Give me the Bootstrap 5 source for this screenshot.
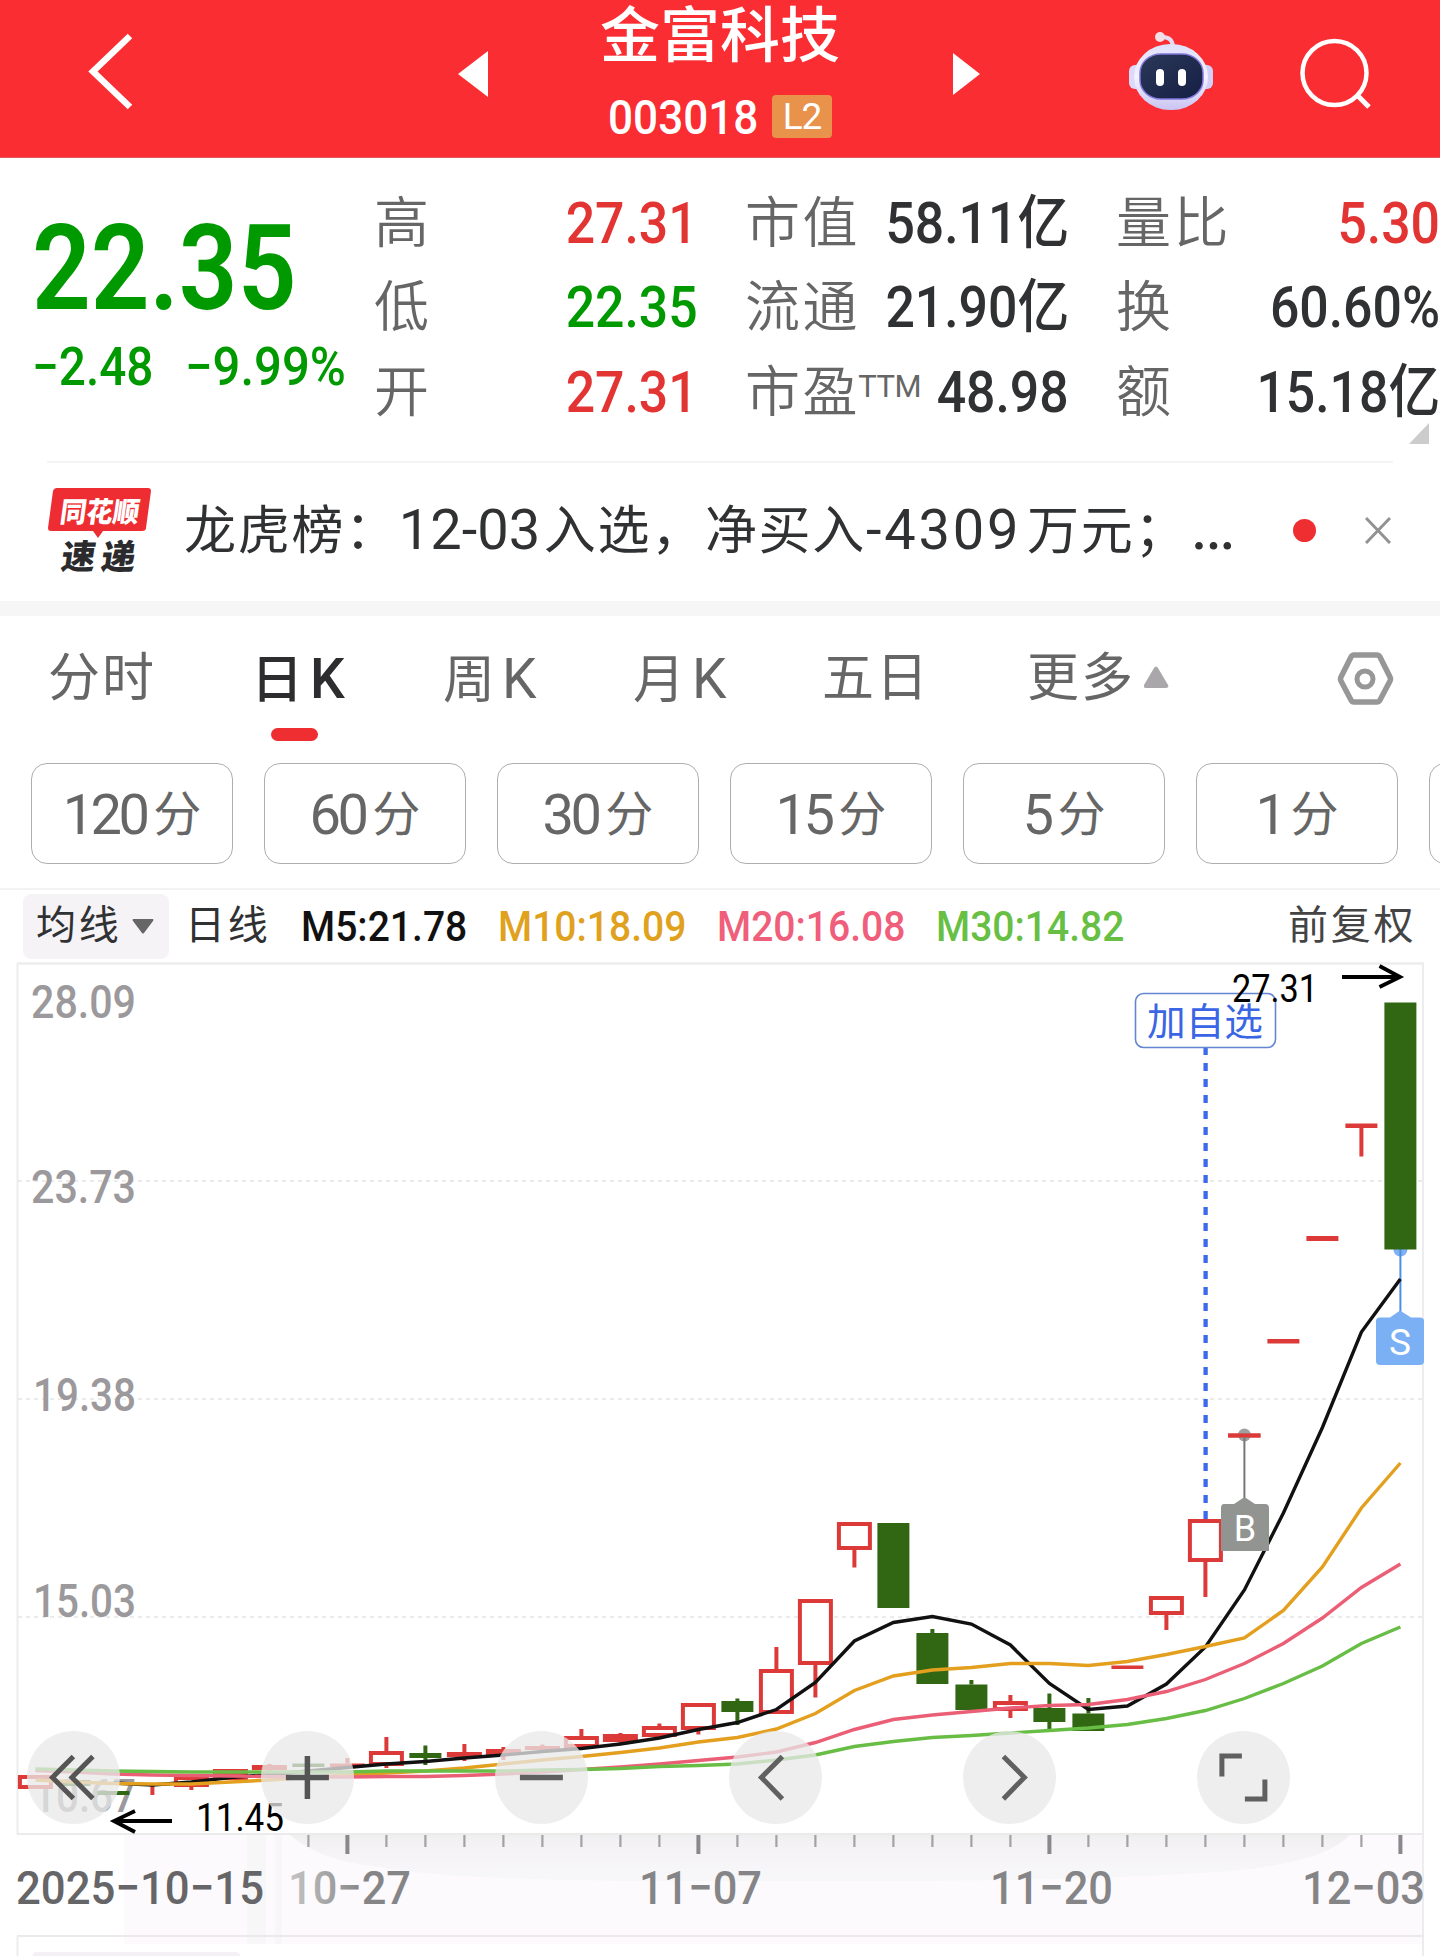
<!DOCTYPE html>
<html lang="zh-CN">
<head>
<meta charset="utf-8">
<meta name="viewport" content="width=device-width, initial-scale=1">
<title>金富科技 003018</title>
<link href="https://cdn.jsdelivr.net/npm/bootstrap@5.3.0/dist/css/bootstrap.min.css" rel="stylesheet">
<style>
  body{width:1440px;height:1957px;overflow:hidden;background:#fff;color:#303133;font-family:Roboto,"Noto Sans CJK SC",sans-serif;line-height:1;-webkit-font-smoothing:antialiased}
  svg{display:block;flex:none}
  .top-bar{height:158px;background:#f92d32;color:#fff;border-bottom:1px solid #e8575b}
  .stock-name{font-size:60px;font-weight:500;line-height:74px;height:74px;white-space:nowrap}
  .stock-code{font-size:49px;font-weight:500;line-height:56px;transform:scaleX(.9);transform-origin:left;width:162px;white-space:nowrap}
  .level-tag{width:60px;height:43px;border-radius:4px;background:#e8924c;font-size:37px;line-height:44px;letter-spacing:-1px}
  .quote{height:303px}
  .up{color:#e33434}.down{color:#009a00}
  .price-col{width:376px;padding:46px 0 0 32px}
  .price-now{font-size:119px;font-weight:600;line-height:130px;transform:scaleX(.865);transform-origin:left;white-space:nowrap}
  .price-diff{font-size:53px;font-weight:500;line-height:60px;margin-top:3px;white-space:nowrap}
  .price-diff span{display:inline-block;transform:scaleX(.9);transform-origin:left}
  .price-diff .diff-b{transform:scaleX(.925)}
  .diff-a{width:153px}
  .stat-col{width:320px;padding-top:24px}
  .stat-row{height:84.3px;white-space:nowrap}
  .stat-key{font-size:55px;letter-spacing:2.6px;color:#666;line-height:84px;margin-top:-1px;margin-left:-2px;font-weight:350}
  .stat-val{font-size:57.5px;font-weight:500;line-height:84px;transform:scaleX(.9);transform-origin:right;margin-right:-2px}
  .stat-key sup{font-size:31px;letter-spacing:-.5px;top:-14px;margin-left:-2px;font-weight:400;vertical-align:baseline;position:relative}
  .hair{height:2px;background:#f4f4f5;margin:0 47px}
  .news{height:138px;padding:0 47px 0 48px;font-size:52px}
  .news-text{white-space:nowrap;letter-spacing:1.7px;line-height:80px;width:1086px;margin-left:32px;margin-top:-2px}
  .news-text span{display:inline-block;font-size:56px;letter-spacing:0}
  .news-text .more-dots{font-size:68px;line-height:40px;margin-left:2px}
  .dot-red{width:23px;height:23px;border-radius:50%;background:#ee2e30;margin-top:-4px}
  .band{height:15px;background:#f6f6f7}
  .tabs{height:147px;font-size:52px;letter-spacing:2px;color:#666;padding-top:25px;padding-left:48px}
  .tabs>div{line-height:76px;white-space:nowrap}
  .tabs i{font-style:normal;margin-left:5px;font-size:55px}
  .tabs .on{color:#2d2d2f;font-weight:500;position:relative}
  .tabs .on::after{content:"";position:absolute;left:20px;top:87px;width:47px;height:13px;border-radius:7px;background:#ee2e30}
  .pills{height:125px;padding-left:31px;gap:31px;overflow:hidden}
  .pill{flex:none;width:202px;height:101px;padding-top:3px;border:1.6px solid #aeaeaf;border-radius:16px;font-size:48px;color:#666}
  .pill b{font-size:56px;font-weight:400;margin-right:7px;letter-spacing:-3.6px}
  .ma-bar{height:71px;border-top:2px solid #f3f3f4;font-size:42px;font-weight:500;white-space:nowrap;padding-top:3px}
  .ma-pick{width:146px;height:65px;border-radius:8px;background:#f6f3f7;margin:0 0 0 23px;padding-left:13px}
  .cjk{font-size:40px;letter-spacing:2.7px;font-weight:400;margin-top:-1px}
  .ma{transform:scaleX(.93);transform-origin:left;line-height:50px;margin-top:1px}
  .chart{position:relative;height:997px}
  .tools{position:absolute;left:27px;top:772px;gap:141.2px}
  .tool{width:92.8px;height:92.8px;border-radius:50%;background:rgba(233,233,233,.76);border:0;padding:0}
  svg text{font-family:Roboto,"Noto Sans CJK SC",sans-serif}
</style>
</head>
<body>
<header class="top-bar d-flex">
  <svg width="600" height="157" viewBox="0 0 600 157"><path d="M130 36 93 71.500 130 107" fill="none" stroke="#fff" stroke-width="6.500"/><path d="M458 74 488 51V97Z" fill="#fff"/></svg>
  <div style="width:240px">
    <div class="stock-name">金富科技</div>
    <div class="d-flex" style="padding:16px 0 0 8px">
      <div class="stock-code">003018</div>
      <div class="level-tag text-center" style="margin:5px 0 0 2px">L2</div>
    </div>
  </div>
  <svg width="600" height="157" viewBox="840 0 600 157">
    <defs><linearGradient id="shell" x1="0" y1="0" x2="0" y2="1"><stop offset="0" stop-color="#dfe0fb"/><stop offset=".5" stop-color="#f3f2ff"/><stop offset="1" stop-color="#c9c4f2"/></linearGradient>
    <linearGradient id="face" x1="0" y1="0" x2="1" y2="1"><stop offset="0" stop-color="#2c3858"/><stop offset="1" stop-color="#141f44"/></linearGradient></defs>
    <path d="M953 53 980 74 953 95Z" fill="#fff"/>
    <path d="M1160 37Q1172 36 1173 46" fill="none" stroke="#e6dcf4" stroke-width="4"/><circle cx="1160" cy="37" r="5" fill="#f3dfe8"/>
    <rect x="1129" y="65" width="14" height="24" rx="6" fill="#dcd9fa"/><rect x="1199" y="65" width="14" height="24" rx="6" fill="#d3cff8"/>
    <rect x="1134" y="44" width="74" height="66" rx="36" ry="33" fill="url(#shell)"/>
    <rect x="1140" y="54" width="63" height="45" rx="21" ry="19" fill="url(#face)" stroke="#8176dc" stroke-width="1.500"/>
    <rect x="1156" y="69" width="8" height="17" rx="4" fill="#fff"/><rect x="1178" y="69" width="8" height="17" rx="4" fill="#fff"/>
    <circle cx="1334.500" cy="73" r="32" fill="none" stroke="#fff" stroke-width="4.500"/><path d="M1357 95 1369 107" stroke="#fff" stroke-width="5"/>
  </svg>
</header>

<section class="quote d-flex">
  <div class="price-col">
    <div class="price-now down">22.35</div>
    <div class="price-diff down"><span class="diff-a">−2.48</span><span class="diff-b">−9.99%</span></div>
  </div>
  <div class="stat-col">
    <div class="stat-row d-flex justify-content-between"><span class="stat-key">高</span><span class="stat-val up">27.31</span></div>
    <div class="stat-row d-flex justify-content-between"><span class="stat-key">低</span><span class="stat-val down">22.35</span></div>
    <div class="stat-row d-flex justify-content-between"><span class="stat-key">开</span><span class="stat-val up">27.31</span></div>
  </div>
  <div class="stat-col" style="margin-left:51px">
    <div class="stat-row d-flex justify-content-between"><span class="stat-key">市值</span><span class="stat-val">58.11亿</span></div>
    <div class="stat-row d-flex justify-content-between"><span class="stat-key">流通</span><span class="stat-val">21.90亿</span></div>
    <div class="stat-row d-flex justify-content-between"><span class="stat-key">市盈<sup>TTM</sup></span><span class="stat-val">48.98</span></div>
  </div>
  <div class="stat-col" style="margin-left:51px">
    <div class="stat-row d-flex justify-content-between"><span class="stat-key">量比</span><span class="stat-val up">5.30</span></div>
    <div class="stat-row d-flex justify-content-between"><span class="stat-key">换</span><span class="stat-val">60.60%</span></div>
    <div class="stat-row d-flex justify-content-between"><span class="stat-key">额</span><span class="stat-val">15.18亿</span></div>
    <svg width="320" height="24" viewBox="0 0 320 24" style="margin-top:-12px"><path d="M311 0V21H291Z" fill="#ccc"/></svg>
  </div>
</section>
<div class="hair"></div>
<section class="news d-flex align-items-center">
  <svg width="104" height="104" viewBox="48 480 104 104">
    <path d="M57 488H148Q151 488 151 491L146 528Q146 531 142 531H103L98 538 93 531H51Q48 531 48 528L53 491Q54 488 57 488Z" fill="#ed2d31"/>
    <text transform="translate(59 522) skewX(-8)" font-size="28" font-weight="900" fill="#fff" textLength="79" lengthAdjust="spacingAndGlyphs">同花顺</text>
    <text transform="translate(60 569) skewX(-8)" font-size="34" font-weight="900" fill="#2b2b2d"><tspan>速</tspan><tspan x="40">递</tspan></text>
  </svg>
  <div class="news-text">龙虎榜：<span style="width:145px">12-03</span>入选，净买入<span style="width:161px;letter-spacing:2.800px">-4309</span>万元；<span class="more-dots">…</span></div>
  <div class="dot-red" style="margin-left:23px"></div>
  <svg width="26" height="27" viewBox="0 0 26 27" style="margin-left:49px;margin-top:-3px"><path d="M1 1 25 26M25 1 1 26" stroke="#929292" stroke-width="3"/></svg>
</section>
<div class="band"></div>
<nav class="tabs d-flex">
  <div style="width:203px">分时</div><div class="on" style="width:192px">日<i>K</i></div><div style="width:190px">周<i>K</i></div><div style="width:189px">月<i>K</i></div><div style="width:205px">五日</div><div style="width:117px">更多</div>
  <svg width="250" height="76" viewBox="1144 641 250 76">
    <path d="M1154 668Q1156 665 1158 668L1168 685Q1169 688 1166 688H1146Q1143 688 1144 685Z" fill="#a9a7aa"/>
    <path d="M1354 655H1377Q1379 655 1380 657L1390 677Q1391 679 1390 681L1380 700Q1379 702 1377 702H1354Q1352 702 1351 700L1341 681Q1340 679 1341 677L1351 657Q1352 655 1354 655Z" fill="none" stroke="#979797" stroke-width="5.500"/>
    <circle cx="1365" cy="679" r="8" fill="none" stroke="#979797" stroke-width="5"/>
  </svg>
</nav>
<section class="pills d-flex">
  <div class="pill d-flex align-items-center justify-content-center"><b>120</b>分</div>
  <div class="pill d-flex align-items-center justify-content-center"><b>60</b>分</div>
  <div class="pill d-flex align-items-center justify-content-center"><b>30</b>分</div>
  <div class="pill d-flex align-items-center justify-content-center"><b>15</b>分</div>
  <div class="pill d-flex align-items-center justify-content-center"><b>5</b>分</div>
  <div class="pill d-flex align-items-center justify-content-center"><b>1</b>分</div>
  <div class="pill"></div>
</section>
<section class="ma-bar d-flex align-items-center">
  <div class="ma-pick d-flex align-items-center"><span class="cjk">均线</span><svg width="22" height="15" viewBox="0 0 22 15" style="margin-left:11px"><path d="M1 0H21Q22 1 21 2L12 14Q11 15 10 14L1 2Q0 1 1 0Z" fill="#666"/></svg></div>
  <span class="cjk" style="margin-left:16px;width:116px">日线</span>
  <span class="ma" style="width:197px;color:#111">M5:21.78</span>
  <span class="ma" style="width:219px;color:#e0a11e">M10:18.09</span>
  <span class="ma" style="width:219px;color:#ef5f7b">M20:16.08</span>
  <span class="ma" style="width:352px;color:#67bf43">M30:14.82</span>
  <span class="cjk" style="color:#444">前复权</span>
</section>
<section class="chart">
  <svg id="kline" width="1440" height="997" viewBox="0 960 1440 997"></svg>
  <div class="tools d-flex">
    <button class="tool"><svg width="92.800" height="92.800" viewBox="-46.400 -46.400 92.800 92.800" fill="none" stroke="#555" stroke-width="5"><path d="M0-21-21 0 0 21M19.500-21-1.500 0 19.500 21"/></svg></button>
    <button class="tool"><svg width="92.800" height="92.800" viewBox="-46.400 -46.400 92.800 92.800" fill="none" stroke="#555" stroke-width="5.500"><path d="M-21.500 0H21.500M0-21.500V21.500"/></svg></button>
    <button class="tool"><svg width="92.800" height="92.800" viewBox="-46.400 -46.400 92.800 92.800" fill="none" stroke="#606060" stroke-width="5.500"><path d="M-21.500 0H21.500"/></svg></button>
    <button class="tool"><svg width="92.800" height="92.800" viewBox="-46.400 -46.400 92.800 92.800" fill="none" stroke="#606060" stroke-width="5"><path d="M7-21-14 0 7 21.500"/></svg></button>
    <button class="tool"><svg width="92.800" height="92.800" viewBox="-46.400 -46.400 92.800 92.800" fill="none" stroke="#606060" stroke-width="5"><path d="M-6-21 15 0-6 21.500"/></svg></button>
    <button class="tool"><svg width="92.800" height="92.800" viewBox="-46.400 -46.400 92.800 92.800" fill="none" stroke="#606060" stroke-width="5"><path d="M-1.500-21.500H-21.500V-1M21.500 2V21.500H1.500"/></svg></button>
  </div>
</section>
<script src="https://cdn.jsdelivr.net/npm/bootstrap@5.3.0/dist/js/bootstrap.bundle.min.js"></script>
<script>
// kind: r hollow red, f filled red, g green, d flat bar; then body top, body bottom, wick top, wick bottom
const bars = [
 ['r',1776,1790],['g',1781,1787],['g',1792,1796],['f',1784,1787,1784,1796],['r',1777,1788,1777,1791],['f',1770,1781,1770,1781],
 ['f',1766,1771,1765,1774],['g',1764.5,1768],['f',1764.5,1768,1759,1768],['r',1752,1767,1738,1769],['g',1754,1759,1746.5,1766],['f',1753,1758,1745,1762],
 ['f',1750,1756,1748,1761],['f',1747,1751,1745.5,1751],['r',1737,1749,1730,1749],['f',1735,1743,1734,1745],['r',1727,1738,1724.5,1738],['r',1704,1731,1704,1735.5],
 ['g',1702,1713,1699.5,1726],['r',1670,1715,1648,1715],['r',1600,1666,1600,1698.5],['r',1523,1551,1523,1568.5],['g',1524,1609],['g',1634,1685,1630,1685],
 ['g',1685.5,1711,1681,1713],['r',1702,1712,1696,1719],['g',1709,1723,1694.5,1730],['g',1714.5,1732,1699,1732],['d',1666.5,1670],['r',1597,1616,1597,1631],
 ['r',1520,1563,1520,1598],['d',1434.5,1438.5],['d',1340,1344.5],['d',1237,1242],['d',1124.5,1129,1124.5,1157.5],['g',1003.5,1250.5]];
const avg = {
 '#111': [null,null,1784,1786,1783,1778.5,1775.5,1772,1768.5,1765,1762.5,1759,1756,1752.5,1749.5,1745,1739,1730.5,1723.5,1710.5,1683.5,1642,1623.5,1617.5,1625,1646,1684.5,1710.5,1707,1685,1648,1591,1514,1428.5,1333,1280],
 '#e39f1d': [1781,1783,1784.5,1785,1785,1783,1781,1778.5,1776,1774,1772,1769,1765,1761,1757.5,1753.5,1749,1743,1738.5,1730,1714.5,1691.5,1677,1671,1668.5,1664.5,1664.5,1666.5,1662.5,1655.5,1647.5,1639,1611.5,1568,1509,1464],
 '#eb5f76': [1771.5,1773,1775,1776,1776.5,1777,1777.5,1778,1778,1777.5,1777.5,1776.5,1775,1773,1770.5,1768,1765,1761.5,1758,1753,1743.5,1730.5,1720.5,1716,1712.5,1709,1706.5,1705.5,1700.5,1692.5,1680.5,1664.5,1644.5,1619,1588.5,1565],
 '#68bd45': [1770,1771,1772,1772.5,1773,1773,1773,1773,1773,1772,1772,1772,1772,1771,1770.5,1769.5,1767.5,1766.5,1765,1761,1756,1747.5,1742.5,1738.5,1736.5,1734,1731.5,1729,1725.5,1719.5,1711.5,1699.5,1684.5,1667,1644.5,1628]};
const X = n => 35.4 + 39 * n, RED = '#dc3a39', GREEN = '#316713';
const line = (x1,y1,x2,y2,c,w,e='') => `<path d="M${x1} ${y1}L${x2} ${y2}" fill="none" stroke="${c}" stroke-width="${w}" ${e}/>`;
const text = (x,y,s,size,len,c,w=400,e='') => `<text x="${x}" y="${y}" font-size="${size}" font-weight="${w}" fill="${c}" textLength="${len}" lengthAdjust="spacingAndGlyphs" ${e}>${s}</text>`;
let h = `<defs><linearGradient id="fog" x1="0" x2="0" y1="0" y2="1"><stop offset="0" stop-color="#f0eff0"/><stop offset=".35" stop-color="#f6f3f7"/><stop offset="1" stop-color="#f7f7f8"/></linearGradient>
<linearGradient id="fade" gradientUnits="userSpaceOnUse" x1="290" x2="365" y1="0" y2="0"><stop offset="0" stop-color="#c4c4c4"/><stop offset="1" stop-color="#858587"/></linearGradient></defs>`;
h += `<rect x="124" y="1836" width="1300" height="109" fill="#fdfafe"/><rect x="247" y="1836" width="19" height="109" fill="#f7f7f8"/><rect x="275" y="1836" width="7" height="109" fill="#f7f7f8"/>`;
h += `<path d="M290 1836H1350Q1320 1868 1200 1874Q1080 1882 880 1882H620Q440 1880 380 1868Q320 1862 290 1836Z" fill="url(#fog)"/>`;
h += line(17,964.5,1424,964.5,'#ededee',2.5) + line(17.5,964,17.5,1836,'#ededee',2) + line(1423,964,1423,1957,'#ededee',2) + line(17,1835,1424,1835,'#ebebec',2) + line(17,1937,1424,1937,'#ece8ec',2) + line(17.5,1937,17.5,1957,'#ededee',2);
h += `<path d="M33 1957V1956Q33 1953 37 1953H236Q240 1953 240 1957Z" fill="#f3f1f4"/>`;
for (const y of [1182,1400,1618]) h += line(18,y,1422,y,'#ebebec',2,'stroke-dasharray="4 4"');
[['28.09',1019],['23.73',1204],['19.38',1411.5],['15.03',1618],['10.67',1813]].forEach(([s,y]) => { const d = s[0] === '1' ? 2 : 0; h += text(31+d,y,s,47,105-d,'#9b999c',500); });
for (let n = 7; n < 36; n++) { const big = n % 9 === 8; h += line(X(n),1836,X(n),big?1855:1848,big?'#8a888b':'#a3a1a4',big?4:2.2); }
h += line(1205.6,1048,1205.6,1520,'#3d6be8',4.3,'stroke-dasharray="8 8"');
h += `<circle cx="1400.400" cy="1250.500" r="7" fill="#7fb2f4"/>` + line(1400.4,1250,1400.4,1313,'#4c8fe0',2);
bars.forEach(([k,t,b,wt,wb],n) => {
  const x = X(n), c = k === 'g' ? GREEN : RED, w = k === 'r' || k === 'f' ? 35 : 32;
  if (wt !== undefined) { if (wt < t) h += line(x,wt,x,t,c,4); if (wb > b) h += line(x,b,x,wb,c,4); }
  h += k === 'r' ? `<rect x="${x-15.5}" y="${t+2}" width="31" height="${b-t-4}" fill="#fff" stroke="${c}" stroke-width="4"/>` : `<rect x="${x-w/2}" y="${t}" width="${w}" height="${b-t}" fill="${c}"/>`;
});
for (const [c,v] of Object.entries(avg)) h += `<polyline fill="none" stroke="${c}" stroke-width="3.400" points="${v.map((y,n) => y === null ? '' : X(n)+','+y).join(' ')}"/>`;
h += `<circle cx="1244.400" cy="1436" r="6.500" fill="#888" opacity=".8"/>` + line(1228,1436.5,1260.5,1436.5,RED,4) + line(1244.4,1438,1244.4,1500,'#777',2);
h += `<path d="M1224 1505H1234L1244.500 1498 1255 1505H1265Q1269 1505 1269 1509V1552H1221V1509Q1221 1505 1224 1505Z" fill="#929492"/>` + `<text x="1245" y="1541.500" font-size="36" text-anchor="middle" fill="#fff">B</text>`;
h += `<path d="M1380 1318.500H1390L1400 1311.500 1411 1318.500H1420Q1424 1318.500 1424 1322V1362Q1424 1366 1420 1366H1380Q1376 1366 1376 1362V1322Q1376 1318.500 1380 1318.500Z" fill="#7cb0f5"/><text x="1400" y="1356" font-size="37" text-anchor="middle" fill="#fff">S</text>`;
h += `<rect x="1135.500" y="994.500" width="140" height="54" rx="8" fill="#fff" stroke="#6486d2" stroke-width="1.600"/>` + text(1147,1036,'加自选',38,116,'#3a66e6');
h += text(1232,1003,'27.31',39.5,86,'#000') + `<path d="M1342 978H1399M1379.500 967 1400 978 1379.500 988" fill="none" stroke="#000" stroke-width="3.800"/>`;
h += text(196,1832,'11.45',39.5,88,'#000') + `<path d="M172 1822H115M135 1812 114 1822 135 1833" fill="none" stroke="#000" stroke-width="3.800"/>`;
h += text(16,1905,'2025−10−15',47,248,'#666567',500) + text(288,1905,'10−27',47,123,'url(#fade)',500) + text(639,1905,'11−07',47,123,'#858587',500) + text(990,1905,'11−20',47,123,'#858587',500) + text(1302,1905,'12−03',47,123,'#858587',500);
document.getElementById('kline').innerHTML = h;
</script>
</body>
</html>
